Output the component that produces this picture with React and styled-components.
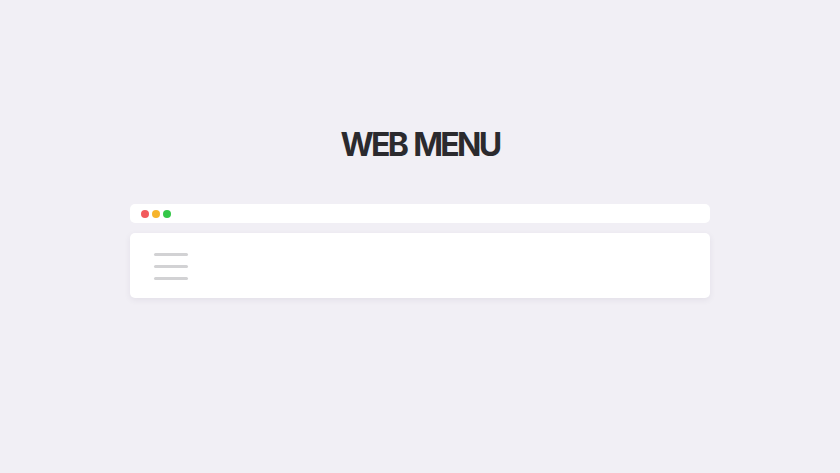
import React from "react";
import styled, { createGlobalStyle } from "styled-components";

const GlobalStyle = createGlobalStyle`
  html, body {
    margin: 0;
    padding: 0;
    background: #f1eff5;
  }
  body {
    font-family: Inter, "Noto Sans", sans-serif;
  }
`;

const Page = styled.div`
  width: 840px;
  height: 473px;
  display: flex;
  flex-direction: column;
  align-items: center;
  box-sizing: border-box;
  padding-top: 125px;
`;

const Title = styled.h1`
  margin: 0;
  font-size: 32px;
  line-height: 39px;
  font-weight: 700;
  letter-spacing: -2.7px;
  word-spacing: 2px;
  color: #2b2a2e;
`;

const Window = styled.div`
  width: 580px;
  margin-top: 40px;
  display: flex;
  flex-direction: column;
  gap: 10px;
`;

const TitleBar = styled.div`
  height: 19px;
  background: #ffffff;
  border-radius: 5px;
  display: flex;
  align-items: center;
  gap: 3px;
  padding-left: 11px;
  padding-top: 1px;
  box-sizing: border-box;
`;

const Dot = styled.span`
  width: 8px;
  height: 8px;
  border-radius: 50%;
  background: ${props => props.color};
`;

const MenuBar = styled.div`
  height: 65px;
  background: #ffffff;
  border-radius: 5px;
  box-shadow: 0 2px 6px rgba(60, 50, 90, 0.08);
  display: flex;
  align-items: center;
  padding-left: 24px;
  padding-top: 2px;
  box-sizing: border-box;
`;

const Burger = styled.div`
  display: flex;
  flex-direction: column;
  gap: 9px;

  span {
    display: block;
    width: 34px;
    height: 3px;
    border-radius: 2px;
    background: #d2d2d4;
  }
`;

const App = () => {
  return (
    <>
      <GlobalStyle />
      <Page>
        <Title>WEB MENU</Title>
        <Window>
          <TitleBar>
            <Dot color="#f2595c" />
            <Dot color="#f6b42c" />
            <Dot color="#33c748" />
          </TitleBar>
          <MenuBar>
            <Burger>
              <span />
              <span />
              <span />
            </Burger>
          </MenuBar>
        </Window>
      </Page>
    </>
  );
};

export default App;
